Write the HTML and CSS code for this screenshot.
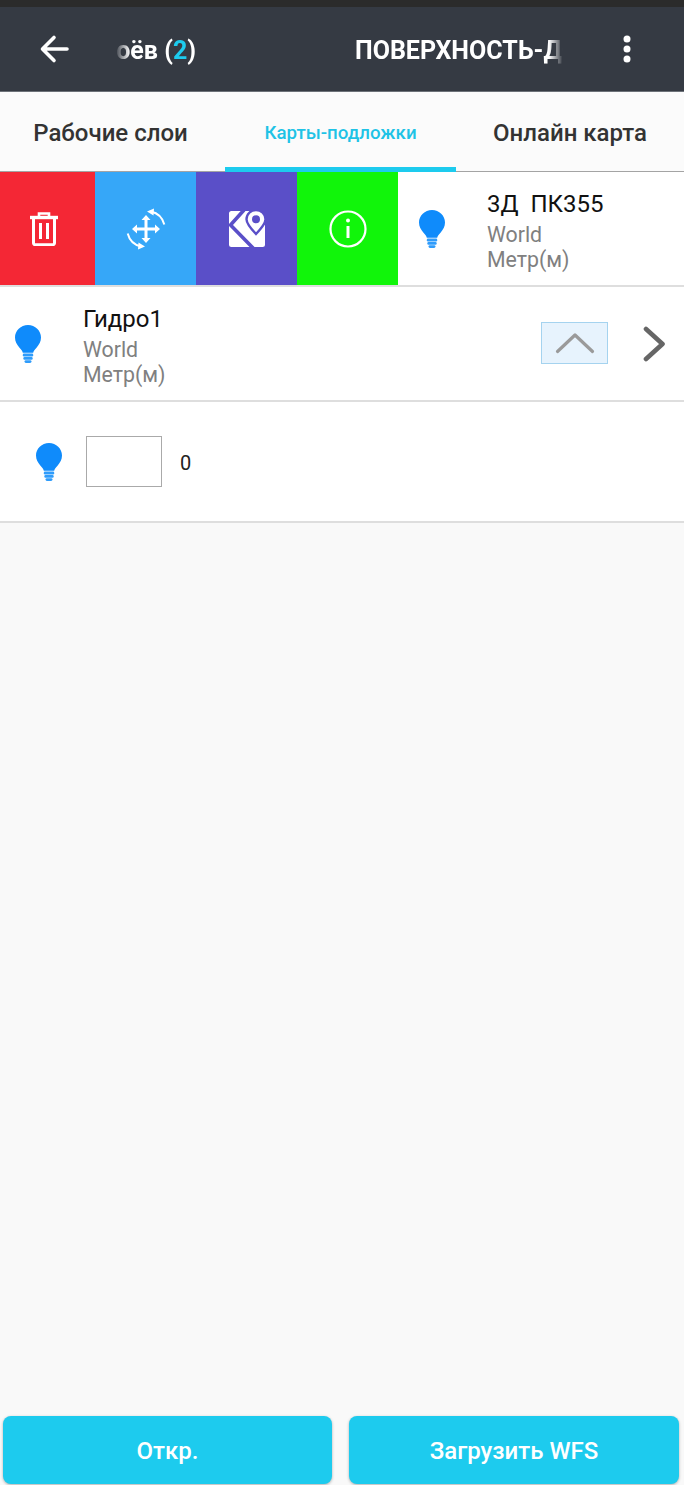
FILE: index.html
```html
<!DOCTYPE html>
<html lang="ru">
<head>
  <meta charset="UTF-8" />
  <title>Карты-подложки</title>
  <link rel="stylesheet" href="styles.css">
</head>
<body>

<svg class="sprite" width="0" height="0">
  <symbol id="bulb" viewBox="0 0 26 38">
    <path fill="#0f8bfb" d="M13 0C5.800 0 0 5.700 0 12.600c0 4.300 2 7.300 4.300 9.800 1.900 2.100 3.200 3.600 3.500 5.400h10.400c.3-1.800 1.600-3.300 3.500-5.400 2.300-2.500 4.300-5.500 4.300-9.800C26 5.700 20.200 0 13 0z"/>
    <rect fill="#2f9cfb" x="7.800" y="28.600" width="10.400" height="2.800" rx="1.200"/>
    <rect fill="#2f9cfb" x="8.300" y="32" width="9.400" height="2.800" rx="1.200"/>
    <rect fill="#2f9cfb" x="9.500" y="35.200" width="7" height="2.800" rx="1.400"/>
  </symbol>
</svg>

<div class="status-strip"></div>

<header class="toolbar">
  <svg class="back" width="30" height="30" viewBox="0 0 30 30">
    <path d="M28 15H4M15 3.500 3.500 15 15 26.500" fill="none" stroke="#fff" stroke-width="3.600" stroke-linecap="round" stroke-linejoin="round"/>
  </svg>
  <div class="title title-left"><span>Слоёв (<b>2</b>)</span></div>
  <div class="title title-right"><span>ПОВЕРХНОСТЬ-ДОРОГА</span></div>
  <svg class="more" width="10" height="28" viewBox="0 0 10 28">
    <circle cx="5" cy="4" r="3.500" fill="#fff"/>
    <circle cx="5" cy="14" r="3.500" fill="#fff"/>
    <circle cx="5" cy="24" r="3.500" fill="#fff"/>
  </svg>
</header>

<nav class="tabs">
  <div class="tab tab-first">Рабочие слои</div>
  <div class="tab tab-active">Карты-подложки</div>
  <div class="tab tab-last">Онлайн карта</div>
</nav>

<main class="list">
  <div class="row row-swiped">
    <div class="action action-red">
      <svg width="28" height="34" viewBox="0 0 28 34" fill="none" stroke="#fff" stroke-width="3">
        <path d="M0 5.500h28" stroke-width="3.400"/>
        <path d="M9 4.500V1.500h10v3" stroke-width="2.600"/>
        <path d="M3.500 6v25a1.700 1.700 0 0 0 1.700 1.700h17.600a1.700 1.700 0 0 0 1.700-1.700V6"/>
        <path d="M10.500 11v16M17.500 11v16"/>
      </svg>
    </div>
    <div class="action action-blue">
      <svg width="42" height="42" viewBox="0 0 42 42" fill="none" stroke="#fff">
        <path d="M21 11v20M11 21h20" stroke-width="3"/>
        <path d="M21 7l-4.500 5h9zM21 35l-4.500-5h9zM7 21l5-4.500v9zM35 21l-5-4.500v9z" fill="#fff" stroke="none"/>
        <path d="M26 3.500c6.500 1.500 11.500 6 13.300 13M16 38.500C9.500 37 4.500 32.500 2.700 25.500" stroke-width="2"/>
        <path d="M22 3.500 29 .5l-.5 7zM20 38.500 13 41.500l.5-7z" fill="#fff" stroke="none"/>
      </svg>
    </div>
    <div class="action action-purple">
      <svg width="36" height="36" viewBox="0 0 36 36">
        <path fill="#fff" d="M2.500 0H20L36 14V33.500A2.500 2.500 0 0 1 33.500 36H2.500A2.500 2.500 0 0 1 0 33.500V2.500A2.500 2.500 0 0 1 2.500 0z"/>
        <path d="M15 -1 1.500 14 25 38" fill="none" stroke="#5a4fc8" stroke-width="3.600"/>
        <path fill="#fff" stroke="#5a4fc8" stroke-width="2.400" d="M27 -1C21.800 -1 17.500 3.200 17.500 8.300c0 4.500 4.500 9.500 9.500 14.700 5-5.200 9.500-10.200 9.500-14.700C36.500 3.200 32.200 -1 27 -1z"/>
        <circle cx="27" cy="8.300" r="4" fill="#5a4fc8"/>
      </svg>
    </div>
    <div class="action action-green">
      <svg width="38" height="38" viewBox="0 0 38 38" fill="none" stroke="#fff">
        <circle cx="19" cy="19" r="17.500" stroke-width="2.200"/>
        <path d="M19 16v12" stroke-width="3"/>
        <circle cx="19" cy="10.500" r="2" fill="#fff" stroke="none"/>
      </svg>
    </div>
    <div class="layer layer-swiped">
      <svg class="bulb"><use href="#bulb"/></svg>
      <div class="layer-text">
        <div class="layer-name">3Д&nbsp; ПК355</div>
        <div class="layer-sub">World</div>
        <div class="layer-sub">Метр(м)</div>
      </div>
    </div>
  </div>

  <div class="row row-plain">
    <div class="layer">
      <svg class="bulb"><use href="#bulb"/></svg>
      <div class="layer-text">
        <div class="layer-name">Гидро1</div>
        <div class="layer-sub">World</div>
        <div class="layer-sub">Метр(м)</div>
      </div>
    </div>
    <div class="up-btn">
      <svg width="40" height="22" viewBox="0 0 40 22">
        <path d="M2.500 19.500 20 3l17.500 16.500" fill="none" stroke="#9a9a9a" stroke-width="3.200" stroke-linecap="round" stroke-linejoin="round"/>
      </svg>
    </div>
    <svg class="chevron" width="24" height="36" viewBox="0 0 24 36">
      <path d="M4 3 20.500 18 4 33" fill="none" stroke="#666" stroke-width="4.600" stroke-linecap="round" stroke-linejoin="round"/>
    </svg>
  </div>

  <div class="row row-color">
    <svg class="bulb"><use href="#bulb"/></svg>
    <div class="swatch"></div>
    <div class="count">0</div>
  </div>
</main>

<footer class="footer">
  <button class="btn">Откр.</button>
  <button class="btn">Загрузить WFS</button>
</footer>

</body>
</html>
```

FILE: styles.css
```css
html, body {
  margin: 0;
  height: 100%;
}
body {
  display: flex;
  flex-direction: column;
  width: 684px;
  height: 1485px;
  overflow: hidden;
  font-family: Roboto, sans-serif;
  background: #f9f9f9;
}
.sprite {
  position: absolute;
}
.status-strip {
  height: 7px;
  background: #2b2b2b;
}
.toolbar {
  display: flex;
  align-items: center;
  height: 85px;
  box-sizing: border-box;
  background: #353a43;
  border-bottom: 1px solid #6d7279;
  color: #fff;
  font-size: 25px;
  font-weight: 700;
}
.back {
  margin-left: 39px;
  flex: none;
}
.title {
  display: flex;
  overflow: hidden;
  white-space: nowrap;
  padding-top: 2px;
}
.title-left {
  justify-content: flex-end;
  width: 86px;
  margin-left: 41px;
  -webkit-mask-image: linear-gradient(to right, transparent 5px, #000 20px);
  mask-image: linear-gradient(to right, transparent 5px, #000 20px);
}
.title-left b {
  font-weight: 700;
  color: #1dcbee;
}
.title-right {
  width: 213px;
  margin-left: 159px;
  -webkit-mask-image: linear-gradient(to right, #000 194px, transparent 208px);
  mask-image: linear-gradient(to right, #000 194px, transparent 208px);
}
.more {
  margin-left: 54px;
  flex: none;
}
.tabs {
  display: flex;
  height: 80px;
  box-sizing: border-box;
  border-bottom: 1px solid #a4a4a4;
  background: #fbfbfb;
  color: #333;
  font-size: 24px;
  font-weight: 500;
}
.tab {
  display: flex;
  align-items: center;
  justify-content: center;
  box-sizing: border-box;
  padding-top: 2px;
}
.tab-first {
  width: 225px;
  padding-right: 4px;
}
.tab-active {
  width: 231px;
  height: 80px;
  font-size: 18.700px;
  color: #1fc3e6;
  border-bottom: 5px solid #1dcbee;
  padding-top: 7px;
}
.tab-last {
  width: 228px;
}
.list {
  flex: 1;
}
.row {
  display: flex;
  align-items: center;
  box-sizing: border-box;
  background: #fff;
  border-bottom: 2px solid #dedede;
}
.row-swiped {
  height: 115px;
  align-items: stretch;
}
.row-plain {
  height: 115px;
}
.row-color {
  height: 121px;
}
.action {
  display: flex;
  align-items: center;
  justify-content: center;
  flex: none;
  width: 101px;
}
.action-red {
  width: 95px;
  padding-right: 7px;
  box-sizing: border-box;
  background: #f42735;
}
.action-blue {
  background: #36a7f8;
}
.action-purple {
  background: #5a4fc8;
}
.action-green {
  background: #11f50a;
}
.layer {
  display: flex;
  align-items: center;
  flex: 1;
  padding-left: 15px;
}
.layer-swiped {
  padding-left: 21px;
}
.bulb {
  flex: none;
  width: 26px;
  height: 38px;
}
.layer-text {
  margin-left: 42px;
  margin-top: 3px;
}
.layer-name {
  font-size: 24px;
  line-height: 30px;
  color: #111;
  margin-bottom: 3px;
}
.layer-sub {
  font-size: 21.300px;
  line-height: 25px;
  color: #808080;
}
.up-btn {
  display: flex;
  align-items: center;
  justify-content: center;
  width: 67px;
  height: 42px;
  box-sizing: border-box;
  margin-top: -2px;
  background: #e7f3fd;
  border: 1px solid #a5d3ef;
  flex: none;
}
.chevron {
  flex: none;
  margin: 0 18px 0 34px;
}
.row-color .bulb {
  margin-left: 36px;
}
.swatch {
  width: 76px;
  height: 51px;
  box-sizing: border-box;
  margin-left: 24px;
  border: 1px solid #aaa;
  background: #fff;
}
.count {
  margin-left: 18px;
  margin-top: 2px;
  font-size: 20px;
  color: #222;
}
.footer {
  display: flex;
  justify-content: space-between;
  padding: 0 5px 1px 3px;
}
.btn {
  width: 329px;
  height: 68px;
  padding: 2px 0 0;
  border: 0;
  border-radius: 8px;
  background: #1dcbee;
  color: #fff;
  font-family: Roboto, sans-serif;
  font-size: 24px;
  font-weight: 500;
  box-shadow: 0 1px 3px rgba(0, 0, 0, 0.3);
}
.btn + .btn {
  width: 330px;
}
```
